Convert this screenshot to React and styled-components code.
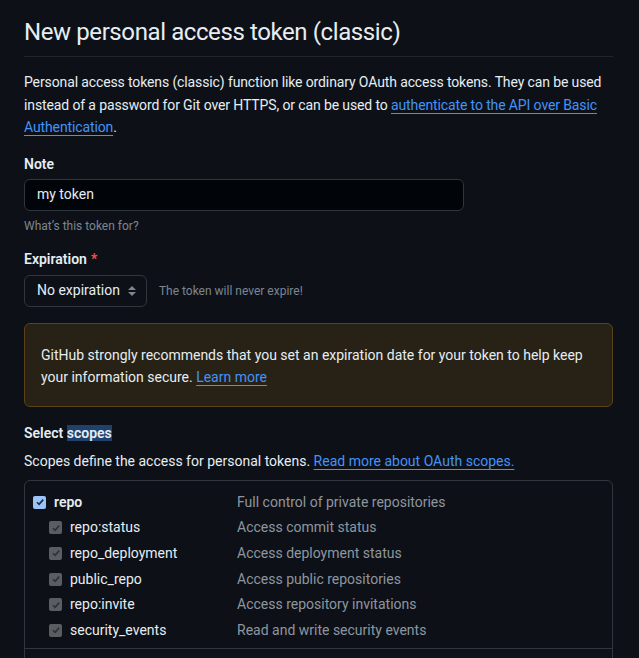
import React from "react";
import styled, { createGlobalStyle } from "styled-components";

const GlobalStyle = createGlobalStyle`
  html, body {
    margin: 0;
    padding: 0;
    background: #0d1117;
  }
  body {
    font-family: Roboto, "Noto Sans", Arial, sans-serif;
    font-size: 14px;
    line-height: 1.5;
    color: #e6edf3;
  }
`;

const Page = styled.div`
  padding: 14px 26px 0 24px;
  min-height: 658px;
  box-sizing: border-box;
  overflow: hidden;
`;

const Title = styled.h1`
  margin: 0;
  font-size: 24px;
  font-weight: 400;
  letter-spacing: -0.4px;
  line-height: 36px;
  padding-bottom: 6px;
  border-bottom: 1px solid #21262d;
`;

const Intro = styled.p`
  margin: 14px 0 0;
  line-height: 22.5px;
  letter-spacing: -0.12px;
`;

const Link = styled.a`
  color: #4493f8;
  text-decoration: underline;
  text-underline-offset: 3px;
`;

const Group = styled.div`
  margin-top: ${(p) => p.top || 14}px;
`;

const Label = styled.div`
  font-weight: 600;
  line-height: 20px;
`;

const Required = styled.span`
  color: #f85149;
  margin-left: 4px;
`;

const Input = styled.div`
  margin-top: 5px;
  width: 440px;
  height: 32px;
  box-sizing: border-box;
  border: 1px solid #30363d;
  border-radius: 6px;
  background: #010409;
  padding: 0 12px;
  display: flex;
  align-items: center;
`;

const Hint = styled.div`
  color: #7d8590;
  font-size: 12px;
  line-height: 18px;
  margin-top: ${(p) => (p.inline ? 0 : 6)}px;
`;

const SelectRow = styled.div`
  margin-top: 6px;
  display: flex;
  align-items: center;
  gap: 12px;
`;

const Select = styled.div`
  height: 32px;
  box-sizing: border-box;
  border: 1px solid #30363d;
  border-radius: 6px;
  padding: 0 9px 0 12px;
  display: flex;
  align-items: center;
  gap: 7px;
`;

const Flash = styled.div`
  margin-top: 16px;
  border: 1px solid #5a4316;
  background: #272215;
  border-radius: 6px;
  padding: 20px 16px 17px;
  line-height: 22.5px;
`;

const Selected = styled.span`
  background: #1f416c;
`;

const ScopeText = styled.div`
  margin-top: 8px;
`;

const ScopeBox = styled.div`
  margin-top: 8px;
  border: 1px solid #30363d;
  border-radius: 6px;
  padding: 9px 0 0;
`;

const ScopeRow = styled.div`
  display: grid;
  grid-template-columns: 204px 1fr;
  align-items: center;
  height: 25.6px;
  padding-left: 8px;
`;

const ScopeName = styled.label`
  display: flex;
  align-items: center;
  gap: 8px;
  padding-left: ${(p) => (p.sub ? 16 : 0)}px;
  font-weight: ${(p) => (p.sub ? 400 : 600)};
`;

const ScopeDesc = styled.div`
  color: #8d96a0;
`;

const Check = styled.span`
  width: 13px;
  height: 13px;
  border-radius: 2px;
  background: ${(p) => (p.disabled ? "#5a5d61" : "#9cc3f7")};
  display: inline-flex;
  align-items: center;
  justify-content: center;
  flex: none;
`;

const Divider = styled.div`
  margin-top: 5px;
  border-top: 1px solid #30363d;
  height: 20px;
`;

function CheckBox({ disabled }) {
  return (
    <Check disabled={disabled}>
      <svg width="10" height="10" viewBox="0 0 10 10">
        <path
          d="M2 5.2 L4.1 7.3 L8.2 2.6"
          fill="none"
          stroke={disabled ? "#2f3235" : "#1b2a44"}
          strokeWidth="1.6"
        />
      </svg>
    </Check>
  );
}

function Arrows() {
  return (
    <svg width="10" height="14" viewBox="0 0 10 14">
      <path d="M5 2 L9 6 H1 Z" fill="#7d8590" />
      <path d="M5 12 L9 8 H1 Z" fill="#7d8590" />
    </svg>
  );
}

const scopes = [
  ["repo:status", "Access commit status"],
  ["repo_deployment", "Access deployment status"],
  ["public_repo", "Access public repositories"],
  ["repo:invite", "Access repository invitations"],
  ["security_events", "Read and write security events"],
];

export default function App() {
  return (
    <Page>
      <GlobalStyle />
      <Title>New personal access token (classic)</Title>
      <Intro>
        Personal access tokens (classic) function like ordinary OAuth access tokens. They can be used
        instead of a password for Git over HTTPS, or can be used to{" "}
        <Link>authenticate to the API over Basic Authentication</Link>.
      </Intro>

      <Group top={15}>
        <Label>Note</Label>
        <Input>my token</Input>
        <Hint>What’s this token for?</Hint>
      </Group>

      <Group top={14}>
        <Label>
          Expiration<Required>*</Required>
        </Label>
        <SelectRow>
          <Select>
            No expiration <Arrows />
          </Select>
          <Hint inline>The token will never expire!</Hint>
        </SelectRow>
      </Group>

      <Flash>
        GitHub strongly recommends that you set an expiration date for your token to help keep your
        information secure. <Link>Learn more</Link>
      </Flash>

      <Group top={16}>
        <Label>
          Select <Selected>scopes</Selected>
        </Label>
        <ScopeText>
          Scopes define the access for personal tokens. <Link>Read more about OAuth scopes.</Link>
        </ScopeText>
      </Group>

      <ScopeBox>
        <ScopeRow>
          <ScopeName>
            <CheckBox />
            repo
          </ScopeName>
          <ScopeDesc>Full control of private repositories</ScopeDesc>
        </ScopeRow>
        {scopes.map(([name, desc]) => (
          <ScopeRow key={name}>
            <ScopeName sub>
              <CheckBox disabled />
              {name}
            </ScopeName>
            <ScopeDesc>{desc}</ScopeDesc>
          </ScopeRow>
        ))}
        <Divider />
      </ScopeBox>
    </Page>
  );
}
